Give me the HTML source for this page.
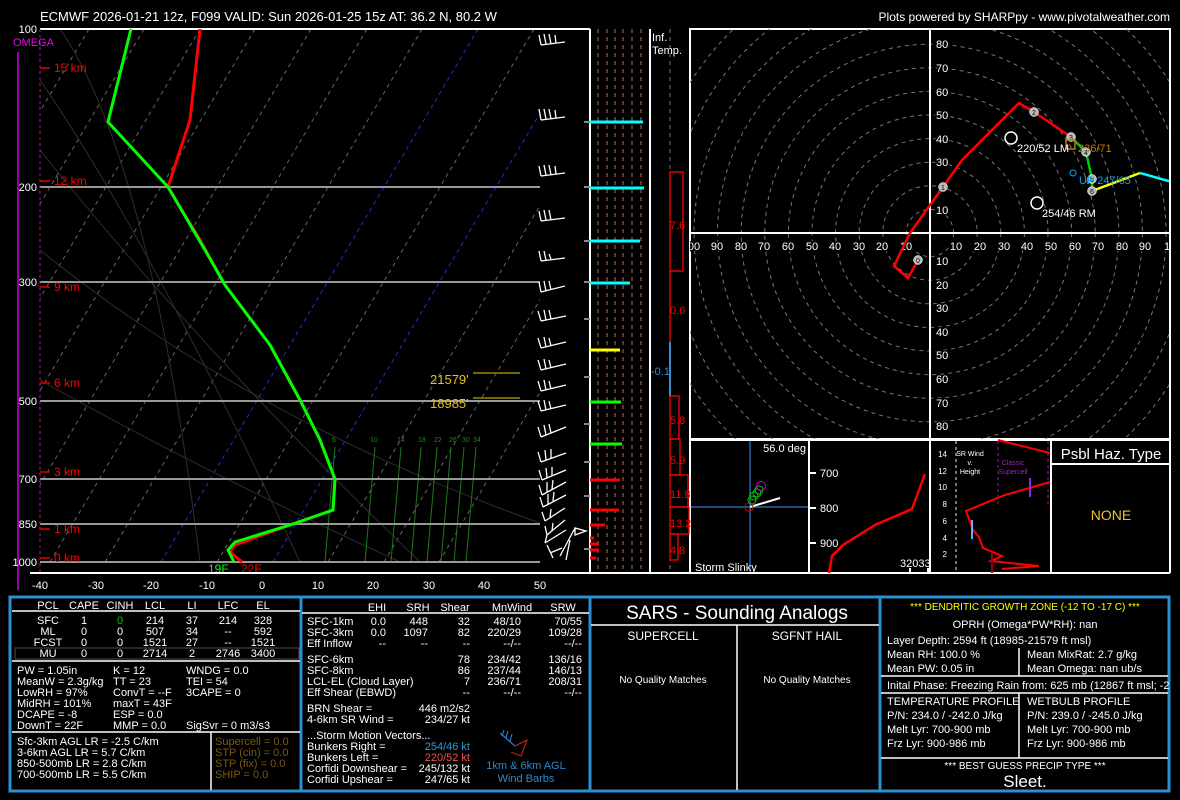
<!DOCTYPE html>
<html><head><meta charset="utf-8"><style>
html,body{margin:0;padding:0;background:#000;}
svg{display:block;font-family:"Liberation Sans",sans-serif;}
</style></head><body>
<svg width="1180" height="800" viewBox="0 0 1180 800" xmlns="http://www.w3.org/2000/svg">
<rect width="1180" height="800" fill="#000"/>
<text x="40" y="21" fill="#fff" font-size="13">ECMWF 2026-01-21 12z, F099  VALID: Sun 2026-01-25 15z  AT: 36.2 N, 80.2 W</text>
<text x="1170" y="21" fill="#fff" font-size="12" text-anchor="end">Plots powered by SHARPpy - www.pivotalweather.com</text>

<defs><clipPath id="sk"><rect x="40" y="29" width="500" height="533"/></clipPath>
<clipPath id="hd"><rect x="690" y="29" width="480" height="410"/></clipPath></defs>
<g clip-path="url(#sk)">
 <g stroke="#666" stroke-width="1" stroke-dasharray="4,4">
  <line x1="-117" y1="562" x2="200" y2="29"/><line x1="-62" y1="562" x2="255" y2="29"/>
  <line x1="-6" y1="562" x2="311" y2="29"/><line x1="50" y1="562" x2="367" y2="29"/>
  <line x1="105" y1="562" x2="422" y2="29"/><line x1="217" y1="562" x2="534" y2="29"/>
  <line x1="328" y1="562" x2="645" y2="29"/><line x1="384" y1="562" x2="701" y2="29"/>
  <line x1="-173" y1="562" x2="144" y2="29"/><line x1="-228" y1="562" x2="89" y2="29"/>
  <line x1="439" y1="562" x2="756" y2="29"/>
 </g>
 <g stroke="#2230d0" stroke-width="1" stroke-dasharray="4,4">
  <line x1="161" y1="562" x2="478" y2="29"/><line x1="273" y1="562" x2="590" y2="29"/>
 </g>
 <g stroke="#2e2e2e" stroke-width="1" fill="none">
  <path d="M40 150 Q200 350 420 562"/><path d="M40 250 Q250 420 540 523"/>
  <path d="M40 80 Q150 240 300 562"/><path d="M60 29 Q150 160 200 562"/>
  <path d="M40 380 Q200 470 400 562"/>
 </g>
 <g stroke="#1a7a1a" stroke-width="1">
  <line x1="335" y1="447" x2="325" y2="562"/><line x1="375" y1="447" x2="365" y2="562"/>
  <line x1="401" y1="447" x2="391" y2="562"/><line x1="421" y1="447" x2="411" y2="562"/>
  <line x1="437" y1="447" x2="427" y2="562"/><line x1="451" y1="447" x2="441" y2="562"/>
  <line x1="464" y1="447" x2="454" y2="562"/><line x1="476" y1="447" x2="466" y2="562"/>
 </g>
 <g fill="#1a8a1a" font-size="7"><text x="332" y="442">6</text><text x="370" y="442">10</text><text x="397" y="442">14</text><text x="418" y="442">18</text><text x="434" y="442">22</text><text x="449" y="442">26</text><text x="462" y="442">30</text><text x="473" y="442">34</text></g>
</g>
<g stroke="#999" stroke-width="2">
 <line x1="40" y1="187" x2="540" y2="187"/><line x1="40" y1="282" x2="540" y2="282"/>
 <line x1="40" y1="401" x2="540" y2="401"/><line x1="40" y1="479" x2="540" y2="479"/>
 <line x1="40" y1="524" x2="540" y2="524"/><line x1="40" y1="562" x2="540" y2="562"/>
</g>
<line x1="40" y1="29" x2="590" y2="29" stroke="#fff" stroke-width="2"/>
<line x1="40" y1="29" x2="40" y2="573" stroke="#c0c" stroke-width="1" stroke-dasharray="3,3"/>
<line x1="18" y1="52" x2="18" y2="590" stroke="#90a" stroke-width="2"/>
<text x="13" y="46" fill="#e0e" font-size="11">OMEGA</text>
<g fill="#fff" font-size="11" text-anchor="end">
 <text x="37" y="33">100</text><text x="37" y="191">200</text><text x="37" y="286">300</text>
 <text x="37" y="405">500</text><text x="37" y="483">700</text><text x="37" y="528">850</text><text x="37" y="566">1000</text>
</g>
<g fill="#f00" font-size="12">
 <text x="54" y="72">15 km</text><text x="54" y="185">12 km</text><text x="54" y="291">9 km</text>
 <text x="54" y="387">6 km</text><text x="54" y="476">3 km</text><text x="54" y="533">1 km</text><text x="54" y="562">0 km</text>
</g>
<g stroke="#a00" stroke-width="2"><line x1="40" y1="68" x2="50" y2="68"/><line x1="40" y1="181" x2="50" y2="181"/><line x1="40" y1="287" x2="50" y2="287"/><line x1="40" y1="383" x2="50" y2="383"/><line x1="40" y1="472" x2="50" y2="472"/><line x1="40" y1="529" x2="50" y2="529"/><line x1="40" y1="558" x2="50" y2="558"/></g>
<g stroke="#776600" stroke-width="2"><line x1="473" y1="373" x2="520" y2="373"/><line x1="473" y1="398" x2="520" y2="398"/></g>
<g fill="#e8c020" font-size="13"><text x="430" y="384">21579'</text><text x="430" y="408">18985'</text></g>
<polyline fill="none" stroke="#f00" stroke-width="3" points="200,29 190,120 168,187 200,240 225,285 270,345 300,400 320,440 335,479 333,510 290,525 235,545 230,552 242,562"/>
<polyline fill="none" stroke="#0f0" stroke-width="3" points="131,29 108,122 168,187 205,250 225,285 270,345 300,400 320,440 335,479 333,510 290,525 235,542 228,550 234,562"/>
<text x="208" y="573" fill="#0f0" font-size="12">19F</text><text x="241" y="573" fill="#f00" font-size="12">22F</text>
<g fill="#fff" font-size="11" text-anchor="middle">
 <text x="40" y="589">-40</text><text x="96" y="589">-30</text><text x="151" y="589">-20</text><text x="207" y="589">-10</text><text x="262" y="589">0</text><text x="318" y="589">10</text><text x="373" y="589">20</text><text x="429" y="589">30</text><text x="484" y="589">40</text><text x="540" y="589">50</text>
</g>
<g stroke="#fff" stroke-width="1.3" fill="none">
 <path d="M565 42 L541 45 M541 45 L539 35 M546 44 L544 34 M551 44 L549 34 M556 43 L555 35"/>
 <path d="M565 117 L541 120 M541 120 L539 109 M546 119 L544 109 M551 119 L549 109 M556 118 L555 110"/>
 <path d="M565 173 L541 176 M541 176 L539 166 M546 175 L544 165 M551 175 L549 165 M556 174 L555 166"/>
 <path d="M565 218 L541 221 M541 221 L539 211 M546 220 L544 210 M551 220 L549 210"/>
 <path d="M565 258 L541 261 M541 261 L539 251 M546 260 L544 251 M551 259 L549 254"/>
 <path d="M565 286 L541 292 M541 292 L539 282 M546 291 L544 281 M551 290 L549 281"/>
 <path d="M566 316 L541 321 M541 321 L538 311 M546 320 L544 310 M551 319 L549 310"/>
 <path d="M566 342 L541 348 M541 348 L538 338 M546 347 L544 337 M551 346 L549 338"/>
 <path d="M566 364 L541 370 M541 370 L538 360 M546 369 L544 359 M551 368 L549 360"/>
 <path d="M566 385 L541 391 M541 391 L538 381 M546 390 L544 380 M551 389 L549 381"/>
 <path d="M566 405 L541 411 M541 411 L538 401 M546 410 L544 400 M551 409 L549 401"/>
 <path d="M566 427 L541 437 M541 437 L538 427 M546 435 L544 425 M551 433 L549 424"/>
 <path d="M566 453 L541 462 M541 462 L538 452 M546 460 L545 450 M551 458 L551 449"/>
 <path d="M566 470 L542 480 M542 480 L539 470 M547 478 L546 468 M552 476 L552 467"/>
 <path d="M566 482 L542 495 M542 495 L539 485 M547 492 L547 482 M552 489 L553 480"/>
 <path d="M566 495 L543 507 M543 507 L540 497 M548 504 L548 494 M553 501 L554 492"/>
 <path d="M565 508 L545 521 M545 521 L542 512 M550 518 L551 509"/>
 <path d="M565 520 L547 535 M547 535 L545 526 M552 531 L553 523"/>
 <path d="M566 530 L545 543 M545 543 L547 535 M575 535 L586 531 L575 528 Z M560 556 L575 528"/>
 <path d="M550 553 L562 548 M547 545 L553 558"/><path d="M570 540 L566 560"/>
</g>
<line x1="590" y1="29" x2="590" y2="573" stroke="#fff" stroke-width="2"/>
<line x1="650" y1="29" x2="650" y2="573" stroke="#fff" stroke-width="2"/>
<line x1="690" y1="29" x2="690" y2="573" stroke="#fff" stroke-width="2"/>
<g stroke="#7a4a30" stroke-width="1.5" stroke-dasharray="4,4">
 <line x1="598" y1="29" x2="598" y2="573"/><line x1="607" y1="29" x2="607" y2="573"/><line x1="615" y1="29" x2="615" y2="573"/>
 <line x1="623" y1="29" x2="623" y2="573"/><line x1="632" y1="29" x2="632" y2="573"/><line x1="641" y1="29" x2="641" y2="573"/>
</g>
<g stroke="#888" stroke-width="2"><line x1="584" y1="122" x2="590" y2="122"/><line x1="584" y1="187" x2="590" y2="187"/><line x1="584" y1="241" x2="590" y2="241"/><line x1="584" y1="282" x2="590" y2="282"/><line x1="584" y1="319" x2="590" y2="319"/><line x1="584" y1="377" x2="590" y2="377"/><line x1="584" y1="424" x2="590" y2="424"/><line x1="584" y1="462" x2="590" y2="462"/><line x1="584" y1="496" x2="590" y2="496"/><line x1="584" y1="549" x2="590" y2="549"/></g>
<g stroke-width="3">
 <line x1="590" y1="122" x2="643" y2="122" stroke="#0ff"/><line x1="590" y1="188" x2="644" y2="188" stroke="#0ff"/>
 <line x1="590" y1="241" x2="640" y2="241" stroke="#0ff"/><line x1="590" y1="283" x2="630" y2="283" stroke="#0ff"/>
 <line x1="590" y1="350" x2="620" y2="350" stroke="#ff0"/><line x1="590" y1="402" x2="621" y2="402" stroke="#0f0"/>
 <line x1="590" y1="444" x2="622" y2="444" stroke="#0f0"/><line x1="590" y1="480" x2="620" y2="480" stroke="#f00"/>
 <line x1="590" y1="510" x2="619" y2="510" stroke="#f00"/><line x1="590" y1="525" x2="605" y2="525" stroke="#f00"/>
 <line x1="590" y1="538" x2="594" y2="538" stroke="#f00"/><line x1="590" y1="544" x2="599" y2="544" stroke="#f00"/>
 <line x1="590" y1="550" x2="599" y2="550" stroke="#f00"/><line x1="590" y1="558" x2="596" y2="558" stroke="#f00"/>
</g>
<line x1="670" y1="29" x2="670" y2="573" stroke="#777" stroke-dasharray="4,4"/>
<text x="652" y="41" fill="#fff" font-size="11">Inf.</text><text x="652" y="54" fill="#fff" font-size="11">Temp.</text>
<g fill="none" stroke="#f00" stroke-width="1.3">
 <rect x="670" y="172" width="13" height="99"/><line x1="670" y1="271" x2="670" y2="342"/>
 <rect x="670" y="396" width="9" height="43"/><rect x="670" y="439" width="10" height="36"/>
 <rect x="670" y="475" width="18" height="32"/><rect x="670" y="507" width="19" height="27"/><rect x="670" y="534" width="8" height="26"/>
</g>
<line x1="670" y1="342" x2="670" y2="396" stroke="#3a8ad0" stroke-width="2"/>
<g fill="#f00" font-size="11"><text x="670" y="229">7.6</text><text x="670" y="314">0.6</text><text x="670" y="424">5.8</text><text x="670" y="464">5.9</text><text x="670" y="498">11.8</text><text x="670" y="527">13.2</text><text x="670" y="554">4.8</text></g>
<text x="651" y="375" fill="#3a8ad0" font-size="11">-0.1</text>

<rect x="690" y="29" width="480" height="410" fill="none" stroke="#fff" stroke-width="2"/>
<g clip-path="url(#hd)">
 <g fill="none" stroke="#777" stroke-dasharray="4,4">
  <circle cx="930" cy="233" r="23.6"/><circle cx="930" cy="233" r="47.2"/><circle cx="930" cy="233" r="70.8"/><circle cx="930" cy="233" r="94.4"/>
  <circle cx="930" cy="233" r="118"/><circle cx="930" cy="233" r="141.6"/><circle cx="930" cy="233" r="165.2"/><circle cx="930" cy="233" r="188.8"/>
  <circle cx="930" cy="233" r="212.4"/><circle cx="930" cy="233" r="236"/><circle cx="930" cy="233" r="259.6"/><circle cx="930" cy="233" r="283.2"/>
 </g>
 <line x1="930" y1="29" x2="930" y2="440" stroke="#fff" stroke-width="2"/>
 <line x1="690" y1="233" x2="1170" y2="233" stroke="#fff" stroke-width="2"/>
 <g fill="#fff" font-size="11" stroke="#000" stroke-width="3" paint-order="stroke">
  <text x="936" y="48">80</text><text x="936" y="72">70</text><text x="936" y="96">60</text><text x="936" y="119">50</text><text x="936" y="143">40</text><text x="936" y="166">30</text><text x="936" y="214">10</text>
  <text x="936" y="265">10</text><text x="936" y="289">20</text><text x="936" y="312">30</text><text x="936" y="336">40</text><text x="936" y="359">50</text><text x="936" y="383">60</text><text x="936" y="407">70</text><text x="936" y="430">80</text>
 </g>
 <g fill="#fff" font-size="11" text-anchor="middle" stroke="#000" stroke-width="3" paint-order="stroke">
  <text x="694" y="250">00</text><text x="717" y="250">90</text><text x="741" y="250">80</text><text x="764" y="250">70</text><text x="788" y="250">60</text><text x="812" y="250">50</text><text x="835" y="250">40</text><text x="859" y="250">30</text><text x="882" y="250">20</text><text x="906" y="250">10</text>
  <text x="956" y="250">10</text><text x="980" y="250">20</text><text x="1004" y="250">30</text><text x="1027" y="250">40</text><text x="1051" y="250">50</text><text x="1075" y="250">60</text><text x="1098" y="250">70</text><text x="1122" y="250">80</text><text x="1145" y="250">90</text><text x="1167" y="250">1</text>
 </g>
 <polyline fill="none" stroke="#f00" stroke-width="2.5" points="918,260 908,278 894,266 910,233 943,187 962,160 1019,103 1034,112 1071,137"/>
 <polyline fill="none" stroke="#0c0" stroke-width="2.5" points="1071,137 1086,152 1092,179 1092,191"/>
 <polyline fill="none" stroke="#ff0" stroke-width="2.5" points="1092,191 1140,173"/>
 <polyline fill="none" stroke="#0ff" stroke-width="2.5" points="1140,173 1172,182"/>
 <g fill="#bbb" stroke="#fff" stroke-width="0.5">
  <circle cx="918" cy="260" r="4.5"/><circle cx="943" cy="187" r="4.5"/><circle cx="1034" cy="112" r="4.5"/><circle cx="1071" cy="137" r="4.5"/><circle cx="1086" cy="152" r="4.5"/><circle cx="1092" cy="179" r="4.5"/><circle cx="1092" cy="191" r="4.5"/>
 </g>
 <g fill="#000" font-size="7" text-anchor="middle"><text x="918" y="263">0</text><text x="943" y="190">1</text><text x="1034" y="115">2</text><text x="1071" y="140">3</text><text x="1086" y="155">4</text><text x="1092" y="182">5</text><text x="1092" y="194">6</text></g>
 <circle cx="1011" cy="138" r="6" fill="none" stroke="#fff" stroke-width="1.5"/>
 <circle cx="1037" cy="203" r="6" fill="none" stroke="#fff" stroke-width="1.5"/>
 <rect x="1066" y="140" width="9" height="9" fill="none" stroke="#c08000" stroke-width="1.5"/>
 <circle cx="1073" cy="173" r="3" fill="none" stroke="#0af" stroke-width="1"/>
 <g font-size="11"><text x="1017" y="152" fill="#fff">220/52 LM</text><text x="1078" y="152" fill="#c08000">236/71</text><text x="1079" y="184" fill="#0af">UP 247/65</text><text x="1042" y="217" fill="#fff">254/46 RM</text></g>
</g>

<g stroke="#fff" stroke-width="2" fill="none">
 <line x1="690" y1="440" x2="1170" y2="440"/><line x1="809" y1="440" x2="809" y2="573"/><line x1="930" y1="440" x2="930" y2="573"/><line x1="1051" y1="440" x2="1051" y2="573"/>
 <line x1="1051" y1="464" x2="1170" y2="464"/><line x1="1170" y1="29" x2="1170" y2="573"/><line x1="30" y1="573" x2="1170" y2="573"/>
</g>
<g stroke="#1a4a80" stroke-width="2"><line x1="750" y1="441" x2="750" y2="572"/><line x1="691" y1="507" x2="808" y2="507"/></g>
<line x1="750" y1="507" x2="780" y2="498" stroke="#fff" stroke-width="2"/>
<g fill="none" stroke-width="1">
 <circle cx="749" cy="507" r="4" stroke="#c00"/><circle cx="752" cy="500" r="4" stroke="#0c0"/><circle cx="754" cy="496" r="4" stroke="#0c0"/><circle cx="757" cy="493" r="4" stroke="#0c0"/><circle cx="759" cy="490" r="4" stroke="#0c0"/><circle cx="761" cy="486" r="4.5" stroke="#c0c"/>
</g>
<text x="806" y="452" fill="#fff" font-size="11" text-anchor="end">56.0 deg</text>
<text x="695" y="571" fill="#fff" font-size="11">Storm Slinky</text>
<g fill="#fff" font-size="11"><text x="820" y="477">700</text><text x="820" y="512">800</text><text x="820" y="547">900</text><text x="900" y="567">32033</text></g>
<g stroke="#fff" stroke-width="2"><line x1="810" y1="473" x2="816" y2="473"/><line x1="810" y1="508" x2="816" y2="508"/><line x1="810" y1="543" x2="816" y2="543"/><line x1="910" y1="568" x2="910" y2="573"/><line x1="928" y1="568" x2="928" y2="573"/></g>
<polyline fill="none" stroke="#f00" stroke-width="2.5" points="925,474 912,509 875,525 843,545 832,556 829,573"/>
<g fill="#fff" font-size="8" text-anchor="end"><text x="947" y="457">14</text><text x="947" y="474">12</text><text x="947" y="490">10</text><text x="947" y="507">8</text><text x="947" y="524">6</text><text x="947" y="541">4</text><text x="947" y="557">2</text></g>
<line x1="956" y1="441" x2="956" y2="572" stroke="#999" stroke-dasharray="3,3" stroke-width="1.5"/>
<g stroke="#808" stroke-width="1.5" stroke-dasharray="3,3"><line x1="998" y1="441" x2="998" y2="505"/><line x1="1048" y1="441" x2="1048" y2="505"/></g>
<g fill="#fff" font-size="7" text-anchor="middle"><text x="970" y="456">SR Wind</text><text x="970" y="465">v.</text><text x="970" y="474">Height</text></g>
<g fill="#a020c0" font-size="7" text-anchor="middle"><text x="1013" y="465">Classic</text><text x="1013" y="474">Supercell</text></g>
<polyline fill="none" stroke="#f00" stroke-width="2" points="998,440 1050,453"/>
<polyline fill="none" stroke="#f00" stroke-width="2" points="1050,482 1005,495 966,511 973,530 979,537 983,548 1002,556 991,561 1039,566 1002,569"/>
<line x1="972" y1="520" x2="972" y2="539" stroke="#6af" stroke-width="2"/>
<line x1="1030" y1="478" x2="1030" y2="497" stroke="#a020e0" stroke-width="2"/>
<line x1="992" y1="553" x2="992" y2="573" stroke="#900" stroke-width="2"/>
<text x="1111" y="459" fill="#fff" font-size="15" text-anchor="middle">Psbl Haz. Type</text>
<text x="1111" y="520" fill="#f0c030" font-size="14" text-anchor="middle">NONE</text>

<g fill="none" stroke="#2a90d0" stroke-width="3">
 <rect x="10" y="597" width="1159" height="194"/>
 <line x1="301" y1="597" x2="301" y2="791"/><line x1="590" y1="597" x2="590" y2="791"/><line x1="880" y1="597" x2="880" y2="791"/>
</g>
<g stroke="#fff" stroke-width="1.5">
 <line x1="12" y1="611" x2="300" y2="611"/><line x1="12" y1="661" x2="300" y2="661"/><line x1="12" y1="732" x2="300" y2="732"/><line x1="211" y1="732" x2="211" y2="790"/>
 <line x1="302" y1="613" x2="589" y2="613"/>
 <line x1="591" y1="625" x2="879" y2="625"/><line x1="737" y1="625" x2="737" y2="790"/>
 <line x1="1019" y1="648" x2="1019" y2="676"/><line x1="881" y1="676" x2="1168" y2="676"/><line x1="881" y1="693" x2="1168" y2="693"/><line x1="1019" y1="693" x2="1019" y2="758"/><line x1="881" y1="758" x2="1168" y2="758"/>
</g>
<rect x="15" y="648" width="284" height="11" fill="none" stroke="#5a4a3a" stroke-width="1"/>
<g fill="#fff" font-size="11" text-anchor="middle">
 <text x="48" y="609">PCL</text><text x="84" y="609">CAPE</text><text x="120" y="609">CINH</text><text x="155" y="609">LCL</text><text x="192" y="609">LI</text><text x="228" y="609">LFC</text><text x="263" y="609">EL</text>
 <text x="48" y="624">SFC</text><text x="84" y="624">1</text><text x="120" y="624" fill="#0c0">0</text><text x="155" y="624">214</text><text x="192" y="624">37</text><text x="228" y="624">214</text><text x="263" y="624">328</text>
 <text x="48" y="635">ML</text><text x="84" y="635">0</text><text x="120" y="635">0</text><text x="155" y="635">507</text><text x="192" y="635">34</text><text x="228" y="635">--</text><text x="263" y="635">592</text>
 <text x="48" y="646">FCST</text><text x="84" y="646">0</text><text x="120" y="646">0</text><text x="155" y="646">1521</text><text x="192" y="646">27</text><text x="228" y="646">--</text><text x="263" y="646">1521</text>
 <text x="48" y="657">MU</text><text x="84" y="657">0</text><text x="120" y="657">0</text><text x="155" y="657">2714</text><text x="192" y="657">2</text><text x="228" y="657">2746</text><text x="263" y="657">3400</text>
</g>
<g fill="#fff" font-size="11">
 <text x="17" y="674">PW = 1.05in</text><text x="113" y="674">K = 12</text><text x="186" y="674">WNDG = 0.0</text>
 <text x="17" y="685">MeanW = 2.3g/kg</text><text x="113" y="685">TT = 23</text><text x="186" y="685">TEI = 54</text>
 <text x="17" y="696">LowRH = 97%</text><text x="113" y="696">ConvT = --F</text><text x="186" y="696">3CAPE = 0</text>
 <text x="17" y="707">MidRH = 101%</text><text x="113" y="707">maxT = 43F</text>
 <text x="17" y="718">DCAPE = -8</text><text x="113" y="718">ESP = 0.0</text>
 <text x="17" y="729">DownT = 22F</text><text x="113" y="729">MMP = 0.0</text><text x="186" y="729">SigSvr = 0 m3/s3</text>
 <text x="17" y="745">Sfc-3km AGL LR = -2.5 C/km</text><text x="17" y="756">3-6km AGL LR = 5.7 C/km</text>
 <text x="17" y="767">850-500mb LR = 2.8 C/km</text><text x="17" y="778">700-500mb LR = 5.5 C/km</text>
</g>
<g fill="#7a5a10" font-size="11"><text x="215" y="745">Supercell = 0.0</text><text x="215" y="756">STP (cin) = 0.0</text><text x="215" y="767">STP (fix) = 0.0</text><text x="215" y="778">SHIP = 0.0</text></g>
<g fill="#fff" font-size="11">
 <text x="377" y="611" text-anchor="middle">EHI</text><text x="418" y="611" text-anchor="middle">SRH</text><text x="455" y="611" text-anchor="middle">Shear</text><text x="512" y="611" text-anchor="middle">MnWind</text><text x="563" y="611" text-anchor="middle">SRW</text>
 <text x="307" y="625">SFC-1km</text><text x="307" y="636">SFC-3km</text><text x="307" y="647">Eff Inflow</text>
 <text x="307" y="663">SFC-6km</text><text x="307" y="674">SFC-8km</text><text x="307" y="685">LCL-EL (Cloud Layer)</text><text x="307" y="696">Eff Shear (EBWD)</text>
 <text x="307" y="712">BRN Shear =</text><text x="307" y="723">4-6km SR Wind =</text>
 <text x="307" y="739">...Storm Motion Vectors...</text><text x="307" y="750">Bunkers Right =</text><text x="307" y="761">Bunkers Left =</text><text x="307" y="772">Corfidi Downshear =</text><text x="307" y="783">Corfidi Upshear =</text>
</g>
<g fill="#fff" font-size="11" text-anchor="end">
 <text x="386" y="625">0.0</text><text x="428" y="625">448</text><text x="470" y="625">32</text><text x="521" y="625">48/10</text><text x="582" y="625">70/55</text>
 <text x="386" y="636">0.0</text><text x="428" y="636">1097</text><text x="470" y="636">82</text><text x="521" y="636">220/29</text><text x="582" y="636">109/28</text>
 <text x="386" y="647">--</text><text x="428" y="647">--</text><text x="470" y="647">--</text><text x="521" y="647">--/--</text><text x="582" y="647">--/--</text>
 <text x="470" y="663">78</text><text x="521" y="663">234/42</text><text x="582" y="663">136/16</text>
 <text x="470" y="674">86</text><text x="521" y="674">237/44</text><text x="582" y="674">146/13</text>
 <text x="470" y="685">7</text><text x="521" y="685">236/71</text><text x="582" y="685">208/31</text>
 <text x="470" y="696">--</text><text x="521" y="696">--/--</text><text x="582" y="696">--/--</text>
 <text x="470" y="712">446 m2/s2</text><text x="470" y="723">234/27 kt</text>
 <text x="470" y="750" fill="#2a9ad8">254/46 kt</text><text x="470" y="761" fill="#f05050">220/52 kt</text><text x="470" y="772">245/132 kt</text><text x="470" y="783">247/65 kt</text>
</g>
<g stroke-width="1.2" fill="none"><path d="M500 733 L515 746 M502 736 L504 730 M506 738 L508 731 M510 741 L512 734" stroke="#2a7ad0"/><path d="M515 746 L527 740 L521 756 L511 752" stroke="#c02020"/></g>
<g fill="#2a8ad0" font-size="11" text-anchor="middle"><text x="526" y="769">1km &amp; 6km AGL</text><text x="526" y="782">Wind Barbs</text></g>
<text x="737" y="619" fill="#fff" font-size="19" text-anchor="middle">SARS - Sounding Analogs</text>
<g fill="#fff" font-size="12" text-anchor="middle"><text x="663" y="640">SUPERCELL</text><text x="807" y="640">SGFNT HAIL</text></g>
<g fill="#fff" font-size="10" text-anchor="middle"><text x="663" y="683">No Quality Matches</text><text x="807" y="683">No Quality Matches</text></g>
<text x="1025" y="610" fill="#ff0" font-size="10" text-anchor="middle">*** DENDRITIC GROWTH ZONE (-12 TO -17 C) ***</text>
<g fill="#fff" font-size="11">
 <text x="1025" y="628" text-anchor="middle">OPRH (Omega*PW*RH): nan</text>
 <text x="887" y="644">Layer Depth: 2594 ft (18985-21579 ft msl)</text>
 <text x="887" y="658">Mean RH: 100.0 %</text><text x="1027" y="658">Mean MixRat: 2.7 g/kg</text>
 <text x="887" y="672">Mean PW: 0.05 in</text><text x="1027" y="672">Mean Omega: nan ub/s</text>
 <text x="887" y="689">Inital Phase: Freezing Rain from: 625 mb (12867 ft msl; -2</text>
 <text x="887" y="705">TEMPERATURE PROFILE</text><text x="1027" y="705">WETBULB PROFILE</text>
 <text x="887" y="719">P/N: 234.0 / -242.0 J/kg</text><text x="1027" y="719">P/N: 239.0 / -245.0 J/kg</text>
 <text x="887" y="733">Melt Lyr: 700-900 mb</text><text x="1027" y="733">Melt Lyr: 700-900 mb</text>
 <text x="887" y="747">Frz Lyr: 900-986 mb</text><text x="1027" y="747">Frz Lyr: 900-986 mb</text>
 <text x="1025" y="769" text-anchor="middle" font-size="10">*** BEST GUESS PRECIP TYPE ***</text>
</g>
<text x="1025" y="787" fill="#fff" font-size="17" text-anchor="middle">Sleet.</text>
</svg>
</body></html>
